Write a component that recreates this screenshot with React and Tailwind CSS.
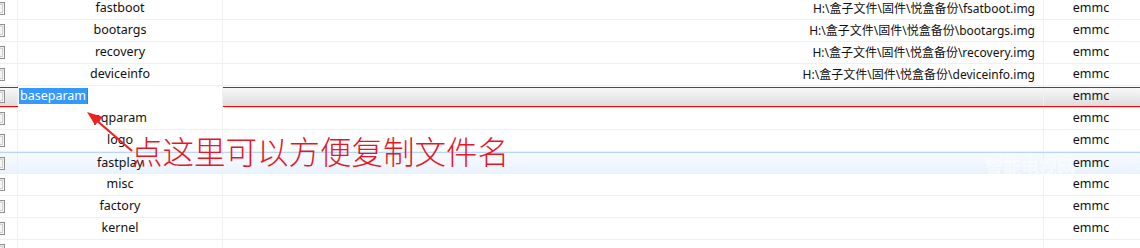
import React from "react";

const rows = [
  { name: "fastboot", path: "H:\\盒子文件\\固件\\悦盒备份\\fsatboot.img" },
  { name: "bootargs", path: "H:\\盒子文件\\固件\\悦盒备份\\bootargs.img" },
  { name: "recovery", path: "H:\\盒子文件\\固件\\悦盒备份\\recovery.img" },
  { name: "deviceinfo", path: "H:\\盒子文件\\固件\\悦盒备份\\deviceinfo.img" },
  { name: "baseparam", path: "", selected: true },
  { name: "pqparam", path: "" },
  { name: "logo", path: "" },
  { name: "fastplay", path: "", hover: true },
  { name: "misc", path: "" },
  { name: "factory", path: "" },
  { name: "kernel", path: "" },
  { name: "initdata", path: "", noType: true, low: true },
];

function Check() {
  return (
    <div className="w-[18px] shrink-0 h-full border-r border-[#f0f0f0] flex items-center overflow-hidden">
      <div className="ml-[-8px] w-[13px] h-[13px] border border-[#8f8f8f] bg-gradient-to-br from-[#dcdcdc] to-[#fbfbfb] flex items-center justify-center">
        <div className="w-[9px] h-[9px] border border-[#d0d0d0] bg-[#f4f4f4]" />
      </div>
    </div>
  );
}

function Row({ r }) {
  if (r.selected) {
    return (
      <div className="relative h-[22px] flex bg-gradient-to-b from-[#fbfbfb] to-[#dcdcdc] border-b border-[#f0f0f0]">
        <div className="absolute left-0 right-0 top-[1px] h-px bg-[#ff0000]" />
        <div className="absolute left-0 right-0 top-[20px] h-px bg-[#ff0000]" />
        <Check />
        <div className="relative z-10 w-[205px] shrink-0 h-[22px] bg-white border-r border-[#f0f0f0] pl-[1px] pt-[2px] flex items-start">
          <span className="bg-[#3399ff] text-white leading-[16px] h-[16px] px-[1px] border-r border-[#c06020]">baseparam</span>
        </div>
        <div className="w-[821px] shrink-0 border-r border-[#f0f0f0]" />
        <div className="flex-1 flex items-center justify-center pr-[2px]">emmc</div>
      </div>
    );
  }
  return (
    <div
      className={
        "h-[22px] flex border-b " +
        (r.hover
          ? "bg-gradient-to-b from-[#f7fbff] to-[#eaf3fe] border-t border-t-[#b8d6fb] border-b-[#eef0f2]"
          : "border-[#f0f0f0]")
      }
    >
      <Check />
      <div
        className={
          "w-[205px] shrink-0 border-r border-[#f0f0f0] flex justify-center " +
          (r.low ? "items-start pt-[5px]" : "items-center")
        }
      >
        {r.name}
      </div>
      <div className="w-[821px] shrink-0 border-r border-[#f0f0f0] flex items-center justify-end pr-[8px] text-[12px]">
        {r.path}
      </div>
      <div className="flex-1 flex items-center justify-center pr-[2px]">{r.noType ? "" : "emmc"}</div>
    </div>
  );
}

export default function App() {
  return (
    <div
      className="relative w-[1140px] h-[248px] overflow-hidden bg-white text-[12.5px] text-[#111]"
      style={{ fontFamily: '"Noto Sans", "Noto Sans CJK SC", sans-serif' }}
    >
      <div className="mt-[-2px]">
        {rows.map((r) => (
          <Row key={r.name} r={r} />
        ))}
      </div>

      {/* watermark */}
      <div
        className="absolute left-[985px] top-[157px] text-[18px] font-bold text-white/50 leading-none pointer-events-none"
        style={{ fontFamily: '"Noto Sans CJK SC", sans-serif' }}
      >
        智能电视网
      </div>

      {/* annotation arrow */}
      <svg className="absolute left-0 top-0 pointer-events-none" width="1140" height="248">
        <line x1="132" y1="151" x2="95" y2="119" stroke="#ee2222" strokeWidth="2.2" />
        <polygon points="87,112 103,117 95,125" fill="#ee2222" />
      </svg>

      {/* annotation text */}
      <div
        className="absolute left-[131px] top-[130px] text-[31.5px] leading-[40px] text-[#e8161e] whitespace-nowrap"
        style={{ fontFamily: '"Noto Sans CJK SC", sans-serif', fontWeight: 300 }}
      >
        点这里可以方便复制文件名
      </div>
    </div>
  );
}
